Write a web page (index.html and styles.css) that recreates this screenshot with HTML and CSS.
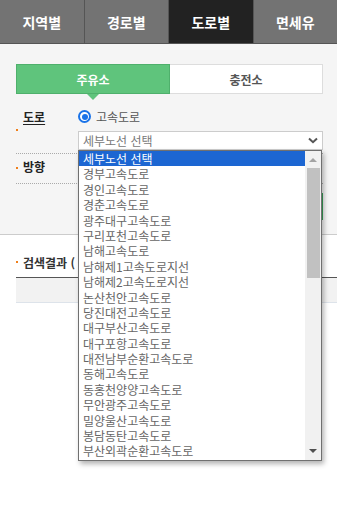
FILE: index.html
```html
<!DOCTYPE html>
<html lang="ko">
<head>
<meta charset="utf-8">
<link rel="stylesheet" href="styles.css">
</head>
<body>
<nav class="tabs">
  <div class="tab">지역별</div>
  <div class="tab">경로별</div>
  <div class="tab active">도로별</div>
  <div class="tab">면세유</div>
</nav>
<section class="search">
  <div class="toggle">
    <div class="seg on">주유소</div>
    <div class="seg">충전소</div>
  </div>
  <div class="field first">
    <div class="label"><span class="dot"></span><u>도로</u></div>
    <div class="control">
      <div class="radio-line"><span class="radio"></span><span class="radio-text">고속도로</span></div>
      <div class="select-wrap">
        <div class="select">
          <span>세부노선 선택</span>
          <svg class="chev" width="10" height="7" viewBox="0 0 10 7"><path d="M1 1.5 L5 5.2 L9 1.5" fill="none" stroke="#555" stroke-width="2"/></svg>
        </div>
        <div class="dropdown">
          <ul class="options">
            <li class="sel">세부노선 선택</li>
            <li>경부고속도로</li>
            <li>경인고속도로</li>
            <li>경춘고속도로</li>
            <li>광주대구고속도로</li>
            <li>구리포천고속도로</li>
            <li>남해고속도로</li>
            <li>남해제1고속도로지선</li>
            <li>남해제2고속도로지선</li>
            <li>논산천안고속도로</li>
            <li>당진대전고속도로</li>
            <li>대구부산고속도로</li>
            <li>대구포항고속도로</li>
            <li>대전남부순환고속도로</li>
            <li>동해고속도로</li>
            <li>동홍천양양고속도로</li>
            <li>무안광주고속도로</li>
            <li>밀양울산고속도로</li>
            <li>봉담동탄고속도로</li>
            <li>부산외곽순환고속도로</li>
          </ul>
          <div class="scrollbar">
            <span class="up"></span>
            <span class="thumb"></span>
            <span class="grow"></span>
            <span class="down"></span>
          </div>
        </div>
      </div>
    </div>
  </div>
  <div class="field second">
    <div class="label"><span class="dot"></span>방향</div>
  </div>
  <div class="btn-row"><div class="btn"></div></div>
</section>
<section class="results">
  <div class="res-title"><span class="dot"></span><span class="res-text">검색결과 (</span></div>
  <div class="thead"></div>
</section>
</body>
</html>
```
FILE: styles.css
```css
* { box-sizing: border-box; }
html, body { margin: 0; padding: 0; }
body {
  width: 337px;
  height: 514px;
  background: #fff;
  font-family: "Noto Sans CJK KR", "Noto Sans", sans-serif;
  color: #333;
  overflow: hidden;
}
.tabs {
  display: flex;
  height: 44px;
  background: #737373;
  border-bottom: 1px solid #555;
}
.tab {
  flex: 1;
  display: flex;
  align-items: center;
  justify-content: center;
  color: #fff;
  font-size: 14px;
  font-weight: 700;
  border-left: 1px solid #555;
}
.tab:first-child { border-left: none; }
.tab.active { background: #222; }

.search {
  background: #f5f5f5;
  padding: 20px 14px 14px 16px;
  border-bottom: 1px solid #ccc;
}
.toggle {
  display: flex;
  height: 30px;
}
.seg {
  flex: 1;
  display: flex;
  align-items: center;
  justify-content: center;
  font-size: 12px;
  font-weight: 700;
  color: #555;
  background: #fff;
  border: 1px solid #ddd;
  border-left: none;
}
.seg.on {
  position: relative;
  background: #5fc47c;
  border: 1px solid #4fb06c;
  color: #fff;
}
.seg.on::after {
  content: "";
  position: absolute;
  left: 50%;
  bottom: -7px;
  margin-left: -6px;
  border-left: 6px solid transparent;
  border-right: 6px solid transparent;
  border-top: 6px solid #5fc47c;
}
.field {
  display: flex;
  border-bottom: 1px dotted #aaa;
}
.field.first { padding: 16px 0 3px; }
.field.second { height: 30px; }
.label {
  width: 62px;
  flex: none;
  display: flex;
  align-items: flex-start;
  font-size: 12px;
  font-weight: 700;
  color: #222;
  line-height: 13px;
}
.field.second .label { line-height: 26px; }
.dot {
  display: inline-block;
  flex: none;
  width: 2px;
  height: 2px;
  background: #f07f1a;
  margin-right: 5px;
  align-self: center;
}
.field.second .dot { align-self: auto; margin-top: 13px; }
.label u { text-decoration-thickness: 1px; text-underline-offset: 2px; }
.control { flex: 1; }
.radio-line {
  display: flex;
  align-items: center;
  height: 13px;
  line-height: 13px;
}
.radio {
  width: 13px;
  height: 13px;
  border-radius: 50%;
  border: 2px solid #1a73e8;
  background: #fff;
  display: flex;
  align-items: center;
  justify-content: center;
  margin-right: 5px;
}
.radio::after {
  content: "";
  width: 6px;
  height: 6px;
  border-radius: 50%;
  background: #1a73e8;
}
.radio-text { font-size: 12px; color: #555; }
.select-wrap {
  position: relative;
  margin-top: 8px;
}
.select {
  height: 19px;
  border: 1px solid #ccc;
  background: #fff;
  display: flex;
  align-items: center;
  justify-content: space-between;
  padding: 0 4px 0 4px;
  font-size: 12px;
  color: #777;
}
.dropdown {
  position: absolute;
  left: 0;
  top: 100%;
  z-index: 5;
  width: 244px;
  height: 311px;
  border: 1px solid #707070;
  background: #fff;
  box-shadow: 2px 3px 5px rgba(0,0,0,0.3);
  display: flex;
}
.options {
  list-style: none;
  margin: 0;
  padding: 0;
  flex: 1;
  overflow: hidden;
}
.options li {
  height: 15.4px;
  line-height: 15.4px;
  font-size: 12px;
  color: #666;
  padding-left: 4px;
  white-space: nowrap;
}
.options li.sel { background: #1c66d2; color: #fff; }
.scrollbar {
  width: 16px;
  flex: none;
  background: #f1f1f1;
  display: flex;
  flex-direction: column;
  align-items: center;
}
.up, .down {
  width: 0;
  height: 0;
  border-left: 4px solid transparent;
  border-right: 4px solid transparent;
}
.up { border-bottom: 4px solid #a3a3a3; margin: 7px 0 6px; }
.thumb {
  width: 13px;
  height: 110px;
  background: #c1c1c1;
}
.grow { flex: 1; }
.down { border-top: 4px solid #505050; margin: 0 0 7px; }
.btn-row {
  display: flex;
  justify-content: flex-end;
  margin-top: 9px;
}
.btn {
  width: 245px;
  height: 27px;
  border: 1px solid #3aa45a;
  background: #5fc47c;
}
.results { padding: 18px 0 0 16px; }
.res-title {
  display: flex;
  align-items: center;
  height: 18px;
  font-size: 12px;
  font-weight: 700;
  color: #333;
  white-space: nowrap;
}
.res-text { flex: none; }
.thead {
  margin-top: 6px;
  height: 26px;
  background: #f2f2f2;
  border-top: 1px solid #555;
  border-bottom: 1px solid #dde3ea;
}
```
